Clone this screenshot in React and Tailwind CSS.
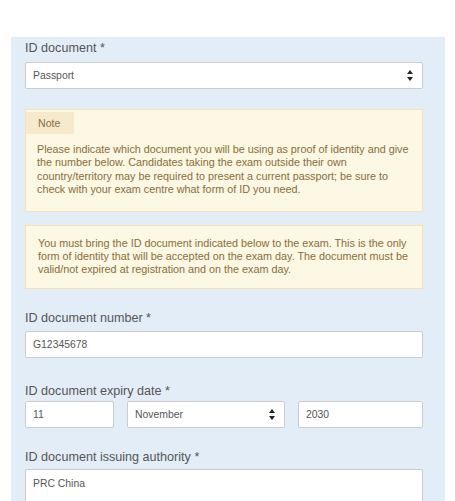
const FONT = { fontFamily: '"Liberation Sans", Arial, sans-serif' }

function Arrows() {
  return (
    <svg width="6" height="11" viewBox="0 0 6 11" className="shrink-0">
      <path d="M3 0 L6 4 L0 4 Z" fill="#222" />
      <path d="M0 7 L6 7 L3 11 Z" fill="#222" />
    </svg>
  )
}

function Label({ children, className = '' }) {
  return (
    <div className={`text-[12.6px] leading-[16px] text-[#555] ${className}`}>{children}</div>
  )
}

function Field({ value, className = '' }) {
  return (
    <div className={`h-[27px] bg-white border border-[#ccc] rounded-[2px] px-[7px] flex items-center text-[10.4px] text-[#555] ${className}`}>
      {value}
    </div>
  )
}

function Select({ value, className = '' }) {
  return (
    <div className={`h-[27px] bg-white border border-[#ccc] rounded-[2px] pl-[7px] pr-[9px] flex items-center justify-between text-[10.4px] text-[#555] ${className}`}>
      <span>{value}</span>
      <Arrows />
    </div>
  )
}

export default function App() {
  return (
    <div className="w-[455px] h-[501px] overflow-hidden bg-white" style={FONT}>
      <div className="h-[37px]" />
      <div className="ml-[11px] w-[434px] h-[600px] bg-[#e3edf7] pl-[14px] pr-[22px] pt-[3px]">
        <Label>ID document *</Label>
        <Select value="Passport" className="mt-[6px]" />

        {/* Note */}
        <div className="mt-[20px] bg-[#fcf8e3] border border-[#f6e2b3] text-[#8a6d3b]">
          <div className="inline-block bg-[#f7e9cb] px-[12px] h-[22px] leading-[22px] text-[10.6px] w-[48px]">Note</div>
          <p className="px-[11px] pt-[9px] pb-[14px] text-[10.8px] leading-[13.4px]">
            Please indicate which document you will be using as proof of identity and give the number below. Candidates taking the exam outside their own country/territory may be required to present a current passport; be sure to check with your exam centre what form of ID you need.
          </p>
        </div>

        <div className="mt-[13px] bg-[#fcf8e3] border border-[#f6e2b3] text-[#8a6d3b] px-[12px] py-[11px] text-[10.8px] leading-[13.4px]">
          You must bring the ID document indicated below to the exam. This is the only form of identity that will be accepted on the exam day. The document must be valid/not expired at registration and on the exam day.
        </div>

        <Label className="mt-[21px]">ID document number *</Label>
        <Field value="G12345678" className="mt-[5px]" />

        <Label className="mt-[25px]">ID document expiry date *</Label>
        <div className="mt-[2px] grid grid-cols-[89px_158px_1fr] gap-x-[13px]">
          <Field value="11" />
          <Select value="November" />
          <Field value="2030" />
        </div>

        <Label className="mt-[21px]">ID document issuing authority *</Label>
        <Field value="PRC China" className="mt-[4px] h-[40px] items-start pt-[6px]" />
      </div>
    </div>
  )
}
